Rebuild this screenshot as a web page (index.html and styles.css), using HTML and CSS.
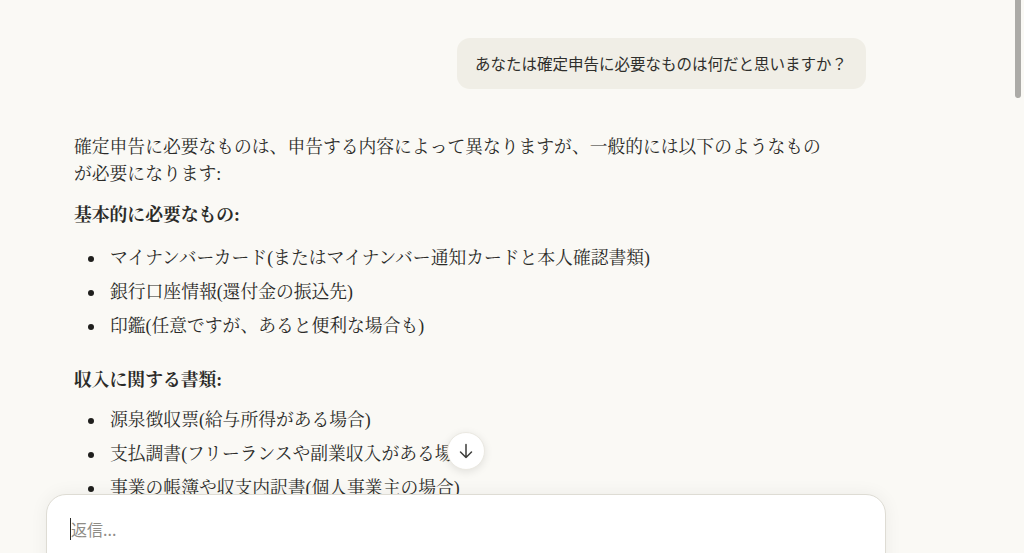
FILE: index.html
```html
<!DOCTYPE html>
<html lang="ja">
<head>
<meta charset="utf-8">
<link rel="stylesheet" href="styles.css">
</head>
<body>
<div class="page">
  <div class="thread">
    <div class="user-row">
      <div class="bubble">あなたは確定申告に必要なものは何だと思いますか？</div>
    </div>
    <div class="reply">
      <p class="para">確定申告に必要なものは、申告する内容によって異なりますが、一般的には以下のようなものが必要になります:</p>
      <p class="head">基本的に必要なもの:</p>
      <ul class="list">
        <li>マイナンバーカード(またはマイナンバー通知カードと本人確認書類)</li>
        <li>銀行口座情報(還付金の振込先)</li>
        <li>印鑑(任意ですが、あると便利な場合も)</li>
      </ul>
      <p class="head head2">収入に関する書類:</p>
      <ul class="list list2">
        <li>源泉徴収票(給与所得がある場合)</li>
        <li>支払調書(フリーランスや副業収入がある場合)</li>
        <li>事業の帳簿や収支内訳書(個人事業主の場合)</li>
      </ul>
    </div>
  </div>
  <button class="scroll-btn" aria-label="下へスクロール">
    <svg width="18" height="18" viewBox="0 0 18 18" fill="none" stroke="#3d3d3a" stroke-width="1.5" stroke-linecap="round" stroke-linejoin="round"><path d="M9 2.5v13M3.5 10l5.5 5.5 5.5-5.5"/></svg>
  </button>
  <div class="composer">
    <div class="input"><span class="caret"></span><span class="placeholder">返信...</span></div>
  </div>
  <div class="scrollbar"></div>
</div>
</body>
</html>
```

FILE: styles.css
```css
html, body {
  margin: 0;
  padding: 0;
  background: #faf9f5;
}
.page {
  position: relative;
  width: 1024px;
  height: 553px;
  overflow: hidden;
}
.thread {
  padding: 38px 0 0 74px;
}
.user-row {
  display: flex;
  justify-content: flex-end;
  margin-right: 158px;
}
.bubble {
  background: #f0eee6;
  border-radius: 13px;
  padding: 12.5px 19px 14.5px 18px;
  font-family: "Noto Sans CJK JP", "Noto Sans", sans-serif;
  font-size: 15.5px;
  line-height: 24px;
  color: #2f2f2c;
}
.reply {
  width: 756px;
  margin-top: 45px;
  font-family: "Liberation Serif", "Noto Serif CJK JP", "Noto Sans CJK JP", serif;
  font-size: 17.8px;
  line-height: 27px;
  color: #2b2b28;
}
.para {
  margin: 0;
}
.head {
  margin: 14px 0 0;
  font-weight: 700;
}
.head2 {
  margin-top: 27px;
}
.list {
  margin: 15.5px 0 0;
  padding: 0 0 0 36px;
  list-style: none;
}
.list2 {
  margin-top: 13.5px;
}
.list li {
  position: relative;
  margin-bottom: 7px;
}
.list li::before {
  content: "";
  position: absolute;
  left: -22px;
  top: 11px;
  width: 6px;
  height: 6px;
  border-radius: 50%;
  background: #1f1f1d;
}
.scroll-btn {
  position: absolute;
  left: 447px;
  top: 432px;
  width: 38px;
  height: 38px;
  border-radius: 50%;
  border: 1px solid #ebe9e2;
  background: #ffffff;
  box-shadow: 0 2px 8px rgba(0,0,0,0.10);
  display: flex;
  align-items: center;
  justify-content: center;
  padding: 0;
}
.composer {
  position: absolute;
  left: 46px;
  top: 494px;
  width: 840px;
  height: 100px;
  border-radius: 20px;
  background: #ffffff;
  border: 1px solid #dedcd4;
  box-sizing: border-box;
  box-shadow: 0 0 18px rgba(0,0,0,0.06);
}
.input {
  display: flex;
  align-items: center;
  padding: 22px 0 0 23px;
  font-family: "Noto Sans CJK JP", "Noto Sans", sans-serif;
  font-size: 16px;
  line-height: 24px;
  color: #8f8d87;
}
.caret {
  width: 1px;
  height: 22px;
  background: #2b2b28;
}
.scrollbar {
  position: absolute;
  right: 3px;
  top: 0;
  width: 6px;
  height: 98px;
  border-radius: 0 0 3px 3px;
  background: #acaba7;
}
```
